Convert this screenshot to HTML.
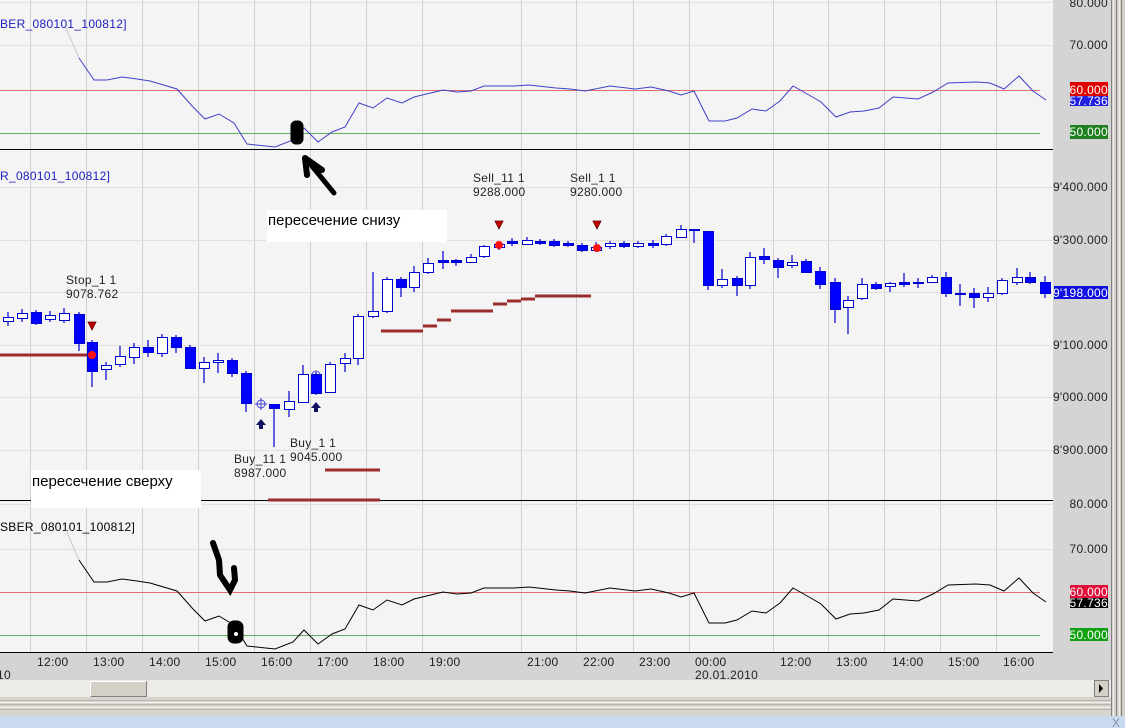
<!DOCTYPE html>
<html><head><meta charset="utf-8"><style>
html,body{margin:0;padding:0;width:1125px;height:728px;overflow:hidden;background:#f4f4f4}
svg{display:block}
text{font-family:"Liberation Sans",sans-serif;font-size:12px;letter-spacing:0.3px}
</style></head><body>
<svg width="1125" height="728" viewBox="0 0 1125 728" xmlns="http://www.w3.org/2000/svg">
<rect x="0" y="0" width="1053" height="652" fill="#f4f4f4"/>
<g stroke="#d0d0d0" stroke-width="1">
<path d="M30.5 0V652M86.5 0V652M142.5 0V652M198.5 0V652M254.5 0V652M310.5 0V652M366.5 0V652M422.5 0V652M521.5 0V652M576.5 0V652M633.5 0V652M689.5 0V652M773.5 0V652M828.5 0V652M884.5 0V652M940.5 0V652M996.5 0V652"/>
</g>
<g stroke="#e0e0e0" stroke-width="1">
<path d="M0 2.5H1053M0 45.5H1053M0 187.5H1053M0 240.5H1053M0 292.5H1053M0 345.5H1053M0 397.5H1053M0 450.5H1053M0 504.5H1053M0 549.5H1053"/>
</g>
<path d="M0 90.5H1040M0 592.5H1040" stroke="#e07070" stroke-width="1"/>
<path d="M0 133.5H1040M0 635.5H1040" stroke="#60b060" stroke-width="1"/>
<path d="M0 149.5H1053M0 500.5H1053M0 652.5H1053" stroke="#000" stroke-width="1"/>

<text x="0" y="28" fill="#2020c0">BER_080101_100812]</text>
<text x="0" y="180" fill="#2020c0">R_080101_100812]</text>
<text x="0" y="531" fill="#000">SBER_080101_100812]</text>

<path d="M66 28L79 58" stroke="#c8c8d8" fill="none"/>
<polyline fill="none" stroke="#4040c8" stroke-width="1" points="79,58 94,80 107,80 122,77 137,79 150,81 177,89 193,107 205,119 219,114 234,123 247,144 275,147 293,140 304,128 318,142 332,132 345,127 359,103 373,108 387,98 402,103 414,97 443,90 457,92 471,91 484,86 514,86 529,85 556,88 570,89 585,91 610,86 635,89 651,87 669,91 681,95 694,91 709,121 725,121 737,118 752,109 766,111 780,101 793,86 809,95 821,102 836,117 850,112 864,111 879,108 893,97 918,99 933,92 948,83 976,82 990,83 1004,89 1019,76 1033,91 1046,100"/>
<path d="M66 530L79 560" stroke="#c8c8c8" fill="none"/>
<polyline fill="none" stroke="#000" stroke-width="1" points="79,560 94,582 107,582 122,579 137,581 150,583 177,591 193,609 205,621 219,616 234,625 247,646 275,649 293,642 304,630 318,644 332,634 345,629 359,605 373,610 387,600 402,605 414,599 443,592 457,594 471,593 484,588 514,588 529,587 556,590 570,591 585,593 610,588 635,591 651,589 669,593 681,597 694,593 709,623 725,623 737,620 752,611 766,613 780,603 793,588 809,597 821,604 836,619 850,614 864,613 879,610 893,599 918,601 933,594 948,585 976,584 990,585 1004,591 1019,578 1033,593 1046,602"/>

<g stroke="#9b2c2c" stroke-width="3">
<path d="M0 355H87M381 331H423M423 326H437M437 320H451M451 311H493M493 304H507M507 301H521M521 299H535M535 296H591M325 470H380M268 500H380"/>
</g>

<g stroke="#0000d0" stroke-width="1.2">
<path d="M8 312V326M22 309V322M36 310V325M50 311V322M64 308V323M79 312V351M92 340V387M106 362V380M120 346V367M134 343V364M148 340V357M162 334V357M176 335V353M190 345V369M204 357V383M218 353V373M232 358V377M246 371V412M274 404V447M289 391V417M303 365V402M316 372V395M330 362V392M345 353V372M358 314V365M373 272V318M387 277V313M401 277V297M414 266V292M428 258V274M443 251V269M456 259V266M471 254V263M484 245V258M499 243V250M512 238V246M527 237V245M540 239V245M554 239V247M568 241V247M582 243V252M596 242V252M610 241V249M624 241V248M638 241V248M653 240V248M666 234V246M681 225V238M694 229V243M708 231V290M722 269V288M737 276V296M750 252V289M764 248V264M778 258V278M792 255V268M806 259V272M820 267V289M835 278V323M848 296V334M862 278V300M876 282V290M890 282V292M904 273V287M918 278V288M932 275V283M946 272V297M960 284V306M974 288V308M988 287V302M1002 278V295M1017 268V285M1030 272V284M1045 276V298"/>
</g>
<g fill="#0000ff" stroke="#0000d0" stroke-width="1">
<rect x="31.5" y="312.5" width="10" height="11"/>
<rect x="74.5" y="314.5" width="10" height="29"/>
<rect x="87.5" y="342.5" width="10" height="29"/>
<rect x="143.5" y="347.5" width="10" height="5"/>
<rect x="171.5" y="337.5" width="10" height="10"/>
<rect x="185.5" y="347.5" width="10" height="21"/>
<rect x="227.5" y="360.5" width="10" height="13"/>
<rect x="241.5" y="373.5" width="10" height="30"/>
<rect x="269.5" y="404.5" width="10" height="4"/>
<rect x="311.5" y="374.5" width="10" height="19"/>
<rect x="396.5" y="279.5" width="10" height="8"/>
<rect x="438.5" y="260.5" width="10" height="2"/>
<rect x="451.5" y="260.5" width="10" height="2"/>
<rect x="507.5" y="241.5" width="10" height="2"/>
<rect x="535.5" y="241.5" width="10" height="2"/>
<rect x="549.5" y="241.5" width="10" height="4"/>
<rect x="563.5" y="243.5" width="10" height="2"/>
<rect x="577.5" y="245.5" width="10" height="5"/>
<rect x="619.5" y="243.5" width="10" height="3"/>
<rect x="648.5" y="243.5" width="10" height="2"/>
<rect x="689.5" y="229.5" width="10" height="1"/>
<rect x="703.5" y="231.5" width="10" height="54"/>
<rect x="732.5" y="278.5" width="10" height="7"/>
<rect x="759.5" y="256.5" width="10" height="3"/>
<rect x="773.5" y="260.5" width="10" height="7"/>
<rect x="801.5" y="261.5" width="10" height="11"/>
<rect x="815.5" y="271.5" width="10" height="13"/>
<rect x="830.5" y="282.5" width="10" height="27"/>
<rect x="871.5" y="284.5" width="10" height="4"/>
<rect x="899.5" y="282.5" width="10" height="2"/>
<rect x="913.5" y="282.5" width="10" height="1"/>
<rect x="941.5" y="277.5" width="10" height="16"/>
<rect x="955.5" y="293.5" width="10" height="1"/>
<rect x="969.5" y="293.5" width="10" height="4"/>
<rect x="1025.5" y="277.5" width="10" height="5"/>
<rect x="1040.5" y="282.5" width="10" height="11"/>
</g>
<g fill="#fff" stroke="#0000d0" stroke-width="1">
<rect x="3.5" y="317.5" width="10" height="4"/>
<rect x="17.5" y="313.5" width="10" height="5"/>
<rect x="45.5" y="315.5" width="10" height="4"/>
<rect x="59.5" y="313.5" width="10" height="7"/>
<rect x="101.5" y="365.5" width="10" height="4"/>
<rect x="115.5" y="356.5" width="10" height="8"/>
<rect x="129.5" y="347.5" width="10" height="10"/>
<rect x="157.5" y="337.5" width="10" height="16"/>
<rect x="199.5" y="362.5" width="10" height="6"/>
<rect x="213.5" y="360.5" width="10" height="2"/>
<rect x="284.5" y="401.5" width="10" height="8"/>
<rect x="298.5" y="374.5" width="10" height="28"/>
<rect x="325.5" y="364.5" width="10" height="28"/>
<rect x="340.5" y="358.5" width="10" height="5"/>
<rect x="353.5" y="316.5" width="10" height="42"/>
<rect x="368.5" y="311.5" width="10" height="5"/>
<rect x="382.5" y="279.5" width="10" height="32"/>
<rect x="409.5" y="272.5" width="10" height="15"/>
<rect x="423.5" y="263.5" width="10" height="9"/>
<rect x="466.5" y="257.5" width="10" height="5"/>
<rect x="479.5" y="246.5" width="10" height="10"/>
<rect x="494.5" y="244.5" width="10" height="3"/>
<rect x="522.5" y="240.5" width="10" height="4"/>
<rect x="591.5" y="247.5" width="10" height="3"/>
<rect x="605.5" y="243.5" width="10" height="3"/>
<rect x="633.5" y="243.5" width="10" height="3"/>
<rect x="661.5" y="236.5" width="10" height="8"/>
<rect x="676.5" y="229.5" width="10" height="8"/>
<rect x="717.5" y="279.5" width="10" height="6"/>
<rect x="745.5" y="257.5" width="10" height="28"/>
<rect x="787.5" y="262.5" width="10" height="3"/>
<rect x="843.5" y="300.5" width="10" height="7"/>
<rect x="857.5" y="284.5" width="10" height="14"/>
<rect x="885.5" y="283.5" width="10" height="3"/>
<rect x="927.5" y="277.5" width="10" height="5"/>
<rect x="983.5" y="293.5" width="10" height="4"/>
<rect x="997.5" y="280.5" width="10" height="13"/>
<rect x="1012.5" y="277.5" width="10" height="5"/>
</g>
<g fill="none" stroke="#4040d0" stroke-width="1">
<circle cx="261" cy="404" r="4"/><path d="M261 398V410M255 404H267"/>
<path d="M312 375A4 4 0 0 1 320 375"/>
</g>
<g fill="#c00000" stroke="#600" stroke-width="0.8">
<path d="M88 322H96L92 330Z"/><path d="M495 221H503L499 229Z"/><path d="M593 221H601L597 229Z"/>
</g>
<g fill="#ff1010"><circle cx="92" cy="355" r="4"/><circle cx="499" cy="245" r="4"/><circle cx="597" cy="248" r="4"/></g>
<g fill="#101060"><path d="M261 419L266 425H263V429H259V425H256Z"/><path d="M316 402L321 408H318V412H314V408H311Z"/></g>

<g fill="#222">
<text x="66" y="284">Stop_1 1</text><text x="66" y="298">9078.762</text>
<text x="473" y="182">Sell_11 1</text><text x="473" y="196">9288.000</text>
<text x="570" y="182">Sell_1 1</text><text x="570" y="196">9280.000</text>
<text x="234" y="463">Buy_11 1</text><text x="234" y="477">8987.000</text>
<text x="290" y="447">Buy_1 1</text><text x="290" y="461">9045.000</text>
</g>

<rect x="267" y="210" width="180" height="32" fill="#fff"/>
<text x="268" y="225" fill="#000" style="font-size:15px;letter-spacing:0">пересечение снизу</text>
<rect x="31" y="470" width="170" height="38" fill="#fff"/>
<text x="32" y="486" fill="#000" style="font-size:15px;letter-spacing:0">пересечение сверху</text>

<g fill="#000" stroke="#000" stroke-linecap="round">
<rect x="291" y="121" width="12" height="23" rx="5"/>
<path d="M307 160L334 193" stroke-width="5"/><path d="M305 158L307 175M305 158L322 170" stroke-width="6"/>
<path d="M213 543L219 560L220 575L230 590L235 580L234 568" stroke-width="6" fill="none"/>
<rect x="228" y="621" width="15" height="22" rx="6"/>
</g>
<circle cx="236" cy="634" r="2" fill="#fff"/>

<rect x="1053" y="0" width="58" height="680" fill="#d4d4d4"/>
<rect x="1111" y="0" width="14" height="716" fill="#d4d0c8"/>
<path d="M1111.5 0V716M1116.5 0V716M1121.5 0V716" stroke="#808080"/>
<path d="M1113.5 0V716M1119.5 0V716" stroke="#f0f0f0"/>
<g fill="#222" text-anchor="end">
<text x="1108" y="7">80.000</text><text x="1108" y="49">70.000</text>
<text x="1108" y="191">9'400.000</text><text x="1108" y="244">9'300.000</text>
<text x="1108" y="349">9'100.000</text><text x="1108" y="401">9'000.000</text><text x="1108" y="454">8'900.000</text>
<text x="1108" y="508">80.000</text><text x="1108" y="553">70.000</text>
</g>
<rect x="1070" y="82" width="38" height="14" fill="#e00000"/>
<rect x="1070" y="96" width="38" height="10" fill="#2020e0"/>
<rect x="1070" y="125" width="38" height="14" fill="#208020"/>
<rect x="1054" y="286" width="54" height="13" fill="#1010e0"/>
<rect x="1070" y="585" width="38" height="13" fill="#e0103a"/>
<rect x="1070" y="598" width="38" height="10" fill="#000"/>
<rect x="1070" y="628" width="38" height="13" fill="#10a010"/>
<g fill="#fff" text-anchor="end">
<text x="1108" y="94">60.000</text><text x="1108" y="105">57.736</text><text x="1108" y="136">50.000</text>
<text x="1108" y="297">9'198.000</text>
<text x="1108" y="596">60.000</text><text x="1108" y="607">57.736</text><text x="1108" y="639">50.000</text>
</g>

<rect x="0" y="653" width="1053" height="27" fill="#d4d4d4"/>
<g fill="#222">
<text x="37" y="666">12:00</text><text x="93" y="666">13:00</text><text x="149" y="666">14:00</text><text x="205" y="666">15:00</text>
<text x="261" y="666">16:00</text><text x="317" y="666">17:00</text><text x="373" y="666">18:00</text><text x="429" y="666">19:00</text>
<text x="527" y="666">21:00</text><text x="583" y="666">22:00</text><text x="639" y="666">23:00</text><text x="695" y="666">00:00</text>
<text x="780" y="666">12:00</text><text x="836" y="666">13:00</text><text x="892" y="666">14:00</text><text x="948" y="666">15:00</text><text x="1003" y="666">16:00</text>
<text x="-10" y="679">010</text><text x="695" y="679">20.01.2010</text>
</g>
<rect x="0" y="680" width="1111" height="17" fill="#ecebe8"/>
<rect x="90.5" y="681.5" width="56" height="15" fill="#d4d0c8" stroke="#808080"/>
<path d="M90.5 696.5V681.5H146" stroke="#fff" fill="none"/>
<rect x="1094.5" y="680.5" width="14" height="16" fill="#d4d0c8" stroke="#808080"/>
<path d="M1099 684L1103 688.5L1099 693Z" fill="#000"/>
<rect x="0" y="697" width="1111" height="19" fill="#d8d5cf"/>
<path d="M0 700.5H1111M0 704.5H1111M0 709.5H1111" stroke="#b8b4ac"/>
<path d="M0 702.5H1111M0 707.5H1111" stroke="#f4f2ee"/>
<rect x="0" y="716" width="1125" height="12" fill="#c9d9ef"/>
<text x="1112" y="727" fill="#8090a8" style="font-size:12px">X</text>
</svg>
</body></html>
